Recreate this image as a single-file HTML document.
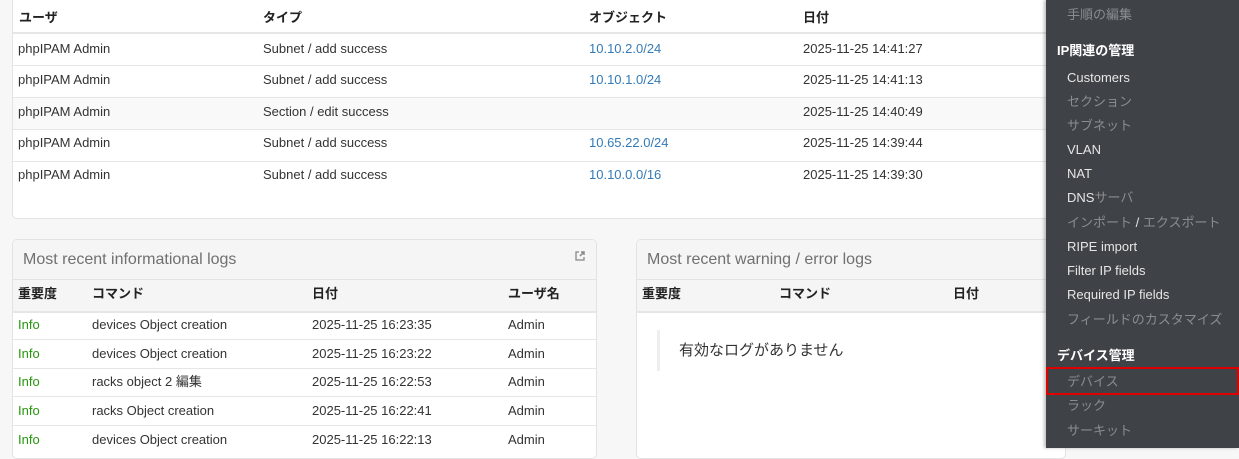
<!DOCTYPE html>
<html><head><meta charset="utf-8"><style>
*{margin:0;padding:0;box-sizing:border-box}
body{width:1239px;height:448px;overflow:hidden;background:#f7f7f7;font-family:"Liberation Sans","Noto Sans CJK JP",sans-serif;font-size:13px;color:#333;position:relative}
.a{position:absolute;white-space:nowrap;line-height:16px}
.card{position:absolute;background:#fff;border:1px solid #e3e3e3;border-radius:5px;overflow:hidden}
.th{font-weight:bold;color:#222}
.ln{position:absolute;height:1px;background:#e6e6e6}
.blue{color:#337ab7}
.g{color:#26960e}
.tt{font-size:16px;line-height:20px;color:#707070}
.sb{position:absolute;left:1046px;top:0;width:193px;height:448px;background:#3f4347;box-shadow:-2px 0 3px rgba(0,0,0,.25)}
.sb div{position:absolute;white-space:nowrap;font-size:13px;line-height:16px}
.h{left:11px;color:#fff;font-weight:bold}
.w{left:21px;color:#e6e6e6}
.d{left:21px;color:#8a8d90}
</style></head><body>

<div class="card" style="left:12px;top:-5px;width:1050px;height:224px;border-radius:0 0 5px 5px">
  <div class="a" style="left:0;top:101px;width:1050px;height:32px;background:#f9f9f9"></div>
  <div class="a th" style="left:6px;top:14px">ユーザ</div>
  <div class="a th" style="left:250px;top:14px">タイプ</div>
  <div class="a th" style="left:576px;top:14px">オブジェクト</div>
  <div class="a th" style="left:790px;top:14px">日付</div>
  <div class="ln" style="left:0;top:36px;width:1050px;height:2px"></div>
  <div class="a" style="left:5px;top:45px">phpIPAM Admin</div><div class="a" style="left:250px;top:45px">Subnet / add success</div><div class="a blue" style="left:576px;top:45px">10.10.2.0/24</div><div class="a" style="left:790px;top:45px">2025-11-25 14:41:27</div>
  <div class="ln" style="left:0;top:69px;width:1050px"></div>
  <div class="a" style="left:5px;top:76px">phpIPAM Admin</div><div class="a" style="left:250px;top:76px">Subnet / add success</div><div class="a blue" style="left:576px;top:76px">10.10.1.0/24</div><div class="a" style="left:790px;top:76px">2025-11-25 14:41:13</div>
  <div class="ln" style="left:0;top:101px;width:1050px"></div>
  <div class="a" style="left:5px;top:108px">phpIPAM Admin</div><div class="a" style="left:250px;top:108px">Section / edit success</div><div class="a" style="left:790px;top:108px">2025-11-25 14:40:49</div>
  <div class="ln" style="left:0;top:133px;width:1050px"></div>
  <div class="a" style="left:5px;top:139px">phpIPAM Admin</div><div class="a" style="left:250px;top:139px">Subnet / add success</div><div class="a blue" style="left:576px;top:139px">10.65.22.0/24</div><div class="a" style="left:790px;top:139px">2025-11-25 14:39:44</div>
  <div class="ln" style="left:0;top:165px;width:1050px"></div>
  <div class="a" style="left:5px;top:171px">phpIPAM Admin</div><div class="a" style="left:250px;top:171px">Subnet / add success</div><div class="a blue" style="left:576px;top:171px">10.10.0.0/16</div><div class="a" style="left:790px;top:171px">2025-11-25 14:39:30</div>
</div>

<div class="card" style="left:12px;top:239px;width:585px;height:220px">
  <div class="a" style="left:0;top:0;width:585px;height:40px;background:#f5f5f5;border-bottom:1px solid #e3e3e3"></div>
  <div class="a tt" style="left:10px;top:10px">Most recent informational logs</div>
  <svg class="a" style="left:561px;top:10px" width="12" height="12" viewBox="0 0 12 12"><path d="M5 2H2v8h8V7" fill="none" stroke="#888" stroke-width="1.3"/><path d="M6 6l4-4M7 2h3v3" fill="none" stroke="#888" stroke-width="1.5"/></svg>
  <div class="a" style="left:0;top:40px;width:585px;height:31px;background:#f5f5f5"></div>
  <div class="a th" style="left:5px;top:46px">重要度</div><div class="a th" style="left:79px;top:46px">コマンド</div><div class="a th" style="left:299px;top:46px">日付</div><div class="a th" style="left:495px;top:46px">ユーザ名</div>
  <div class="ln" style="left:0;top:71px;width:585px;height:2px"></div>
  <div class="a g" style="left:5px;top:77px">Info</div><div class="a" style="left:79px;top:77px">devices Object creation</div><div class="a" style="left:299px;top:77px">2025-11-25 16:23:35</div><div class="a" style="left:495px;top:77px">Admin</div>
  <div class="ln" style="left:0;top:99px;width:585px"></div>
  <div class="a g" style="left:5px;top:106px">Info</div><div class="a" style="left:79px;top:106px">devices Object creation</div><div class="a" style="left:299px;top:106px">2025-11-25 16:23:22</div><div class="a" style="left:495px;top:106px">Admin</div>
  <div class="ln" style="left:0;top:128px;width:585px"></div>
  <div class="a g" style="left:5px;top:134px">Info</div><div class="a" style="left:79px;top:134px">racks object 2 編集</div><div class="a" style="left:299px;top:134px">2025-11-25 16:22:53</div><div class="a" style="left:495px;top:134px">Admin</div>
  <div class="ln" style="left:0;top:156px;width:585px"></div>
  <div class="a g" style="left:5px;top:163px">Info</div><div class="a" style="left:79px;top:163px">racks Object creation</div><div class="a" style="left:299px;top:163px">2025-11-25 16:22:41</div><div class="a" style="left:495px;top:163px">Admin</div>
  <div class="ln" style="left:0;top:185px;width:585px"></div>
  <div class="a g" style="left:5px;top:192px">Info</div><div class="a" style="left:79px;top:192px">devices Object creation</div><div class="a" style="left:299px;top:192px">2025-11-25 16:22:13</div><div class="a" style="left:495px;top:192px">Admin</div>
</div>

<div class="card" style="left:636px;top:239px;width:430px;height:220px">
  <div class="a" style="left:0;top:0;width:430px;height:40px;background:#f5f5f5;border-bottom:1px solid #e3e3e3"></div>
  <div class="a tt" style="left:10px;top:10px">Most recent warning / error logs</div>
  <div class="a" style="left:0;top:40px;width:430px;height:31px;background:#f5f5f5"></div>
  <div class="a th" style="left:5px;top:46px">重要度</div><div class="a th" style="left:142px;top:46px">コマンド</div><div class="a th" style="left:316px;top:46px">日付</div>
  <div class="ln" style="left:0;top:71px;width:430px;height:2px"></div>
  <div class="a" style="left:20px;top:90px;width:3px;height:41px;background:#eee"></div>
  <div class="a" style="left:42px;top:102px;font-size:15px;line-height:18px">有効なログがありません</div>
</div>

<div class="sb">
  <div class="d" style="top:7px">手順の編集</div>
  <div class="h" style="top:43px">IP関連の管理</div>
  <div class="w" style="top:70px">Customers</div>
  <div class="d" style="top:94px">セクション</div>
  <div class="d" style="top:118px">サブネット</div>
  <div class="w" style="top:142px">VLAN</div>
  <div class="w" style="top:166px">NAT</div>
  <div class="w" style="top:190px">DNS<span style="color:#8a8d90">サーバ</span></div>
  <div class="d" style="top:215px">インポート <span style="color:#e6e6e6">/</span> エクスポート</div>
  <div class="w" style="top:239px">RIPE import</div>
  <div class="w" style="top:263px">Filter IP fields</div>
  <div class="w" style="top:287px">Required IP fields</div>
  <div class="d" style="top:312px">フィールドのカスタマイズ</div>
  <div class="h" style="top:348px">デバイス管理</div>
  <div style="left:0;top:367px;width:193px;height:28px;border:2px solid #e00000"></div>
  <div class="d" style="top:374px">デバイス</div>
  <div class="d" style="top:398px">ラック</div>
  <div class="d" style="top:423px">サーキット</div>
</div>
</body></html>
